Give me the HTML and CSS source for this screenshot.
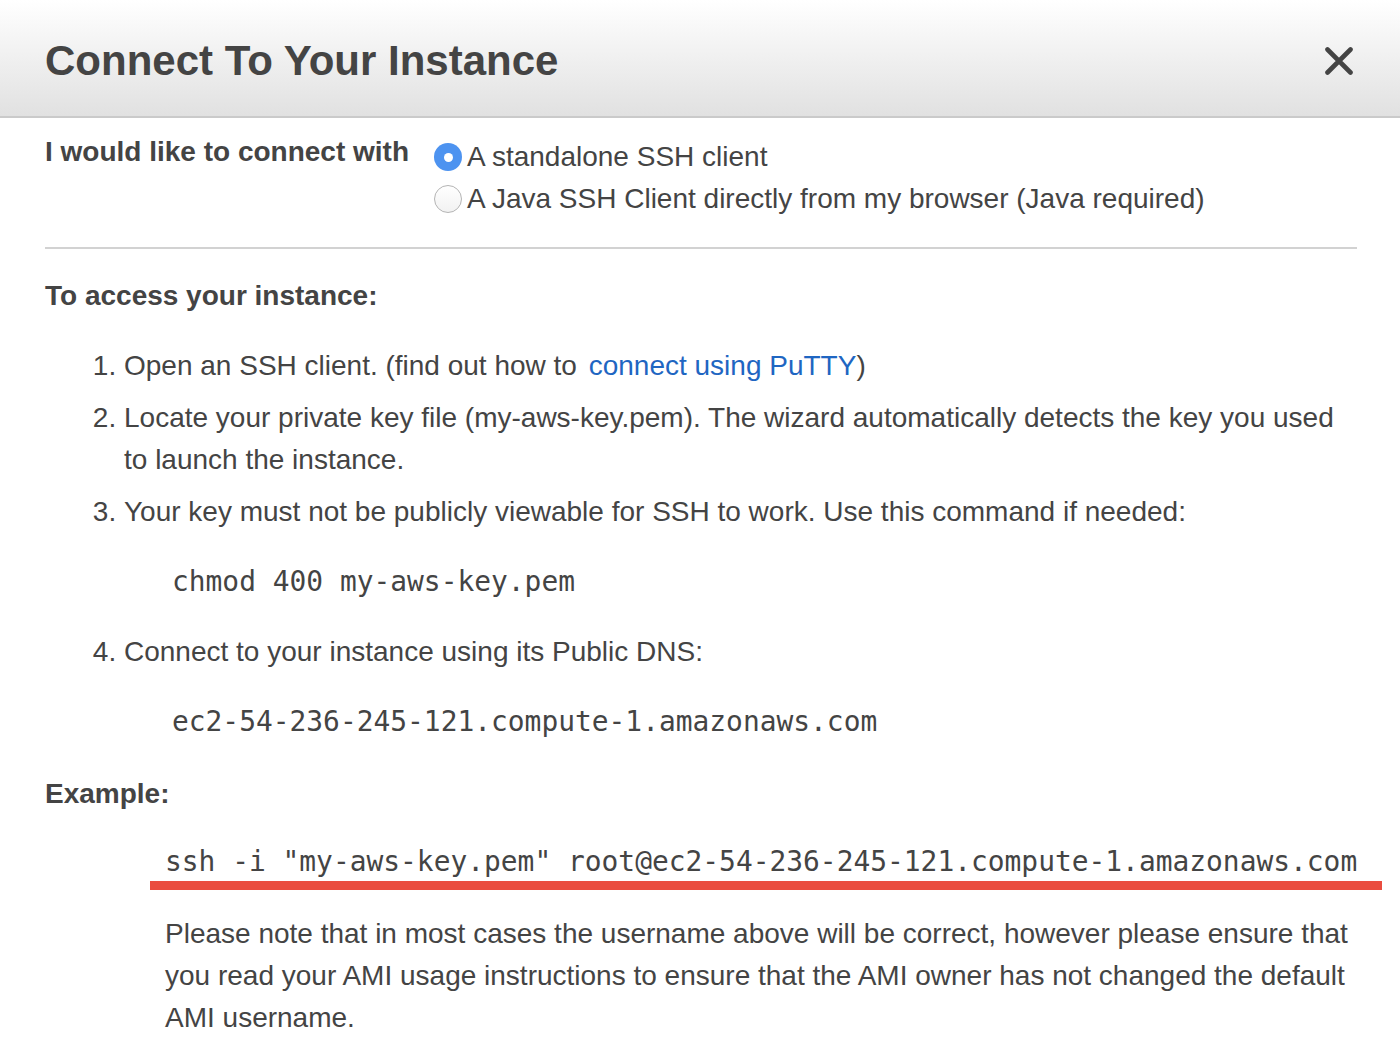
FILE: index.html
```html
<!DOCTYPE html>
<html lang="en">
<head>
<meta charset="utf-8">
<title>Connect To Your Instance</title>
<link rel="stylesheet" href="styles.css">
</head>
<body>
<div class="modal">
  <header class="modal-header">
    <h1 class="modal-title">Connect To Your Instance</h1>
    <button class="close" aria-label="Close">
      <svg width="28" height="28" viewBox="0 0 28 28"><path d="M2.5 2.5 L25.5 25.5 M25.5 2.5 L2.5 25.5" stroke="#444" stroke-width="4.6" stroke-linecap="round" fill="none"/></svg>
    </button>
  </header>
  <div class="modal-body">
    <div class="connect-row">
      <div class="connect-label">I would like to connect with</div>
      <div class="options">
        <label class="opt"><span class="radio checked"></span>A standalone SSH client</label>
        <label class="opt"><span class="radio"></span>A Java SSH Client directly from my browser (Java required)</label>
      </div>
    </div>
    <hr class="divider">
    <h2 class="section-title">To access your instance:</h2>
    <ol class="steps">
      <li>Open an SSH client. (find out how to <a class="link" href="#">connect using PuTTY</a>)</li>
      <li>Locate your private key file (my-aws-key.pem). The wizard automatically detects the key you used to launch the instance.</li>
      <li>Your key must not be publicly viewable for SSH to work. Use this command if needed:
        <div class="code">chmod 400 my-aws-key.pem</div>
      </li>
      <li>Connect to your instance using its Public DNS:
        <div class="code">ec2-54-236-245-121.compute-1.amazonaws.com</div>
      </li>
    </ol>
    <h2 class="section-title">Example:</h2>
    <div class="example">
      <div class="example-code">ssh -i "my-aws-key.pem" root@ec2-54-236-245-121.compute-1.amazonaws.com</div>
      <div class="highlight-bar"></div>
    </div>
    <p class="note">Please note that in most cases the username above will be correct, however please ensure that you read your AMI usage instructions to ensure that the AMI owner has not changed the default AMI username.</p>
  </div>
</div>
</body>
</html>
```
FILE: styles.css
```css
* { box-sizing: border-box; }
html, body { margin: 0; padding: 0; background: #fff; }
body {
  font-family: "Liberation Sans", Arial, Helvetica, sans-serif;
  color: #444;
  font-size: 28px;
  line-height: 42px;
}
.modal { width: 1400px; }
.modal-header {
  height: 118px;
  display: flex;
  align-items: center;
  justify-content: space-between;
  padding: 0 47px 0 45px;
  background: linear-gradient(#ffffff, #e1e1e1);
  border-bottom: 2px solid #cacaca;
}
.modal-title {
  margin: 0;
  font-size: 42px;
  font-weight: bold;
  color: #444;
  line-height: 1;
  padding-top: 6px;
}
.close {
  border: 0;
  background: none;
  padding: 0;
  width: 28px;
  height: 28px;
  margin-top: 6px;
  display: flex;
}
.modal-body { padding: 13px 43px 0 45px; }
.connect-row { display: flex; gap: 25px; }
.connect-label { font-weight: bold; white-space: nowrap; }
.options { padding-top: 5px; display: flex; flex-direction: column; }
.opt { display: flex; align-items: center; gap: 5px; white-space: nowrap; }
.radio {
  width: 28px; height: 28px;
  border-radius: 50%;
  border: 1px solid #b4b4b4;
  background: linear-gradient(#ffffff, #f2f2f2);
  display: inline-block;
  position: relative;
  flex: none;
}
.radio.checked {
  border: 0;
  background: #4d93f0;
}
.radio.checked::after {
  content: "";
  position: absolute;
  width: 9px; height: 9px;
  border-radius: 50%;
  background: #fff;
  left: 9.5px; top: 9.5px;
}
.divider {
  border: 0;
  height: 2px;
  background: #d2d2d2;
  margin: 27px 0 26px;
}
.section-title {
  margin: 0;
  font-size: 28px;
  font-weight: bold;
  line-height: 42px;
}
.steps {
  margin: 28px 0 30px;
  padding-left: 79px;
}
.steps li { margin-bottom: 10px; }
.steps li:last-child { margin-bottom: 0; }
.link { color: #1f66c2; text-decoration: none; margin-left: 4px; }
.code {
  font-family: "DejaVu Sans Mono", "Liberation Mono", monospace;
  font-size: 27.9px;
  margin: 28px 0 28px 48px;
  color: #444;
  white-space: nowrap;
}
.steps li:last-child .code { margin-bottom: 0; }
.example { margin: 29px -25px 0 105px; }
.example-code {
  font-family: "DejaVu Sans Mono", "Liberation Mono", monospace;
  font-size: 27.9px;
  line-height: 36px;
  padding-left: 15px;
  white-space: nowrap;
}
.highlight-bar {
  height: 9px;
  background: #ea4d3f;
  margin-top: 1px;
}
.note { margin: 23px -8px 0 120px; }
```
